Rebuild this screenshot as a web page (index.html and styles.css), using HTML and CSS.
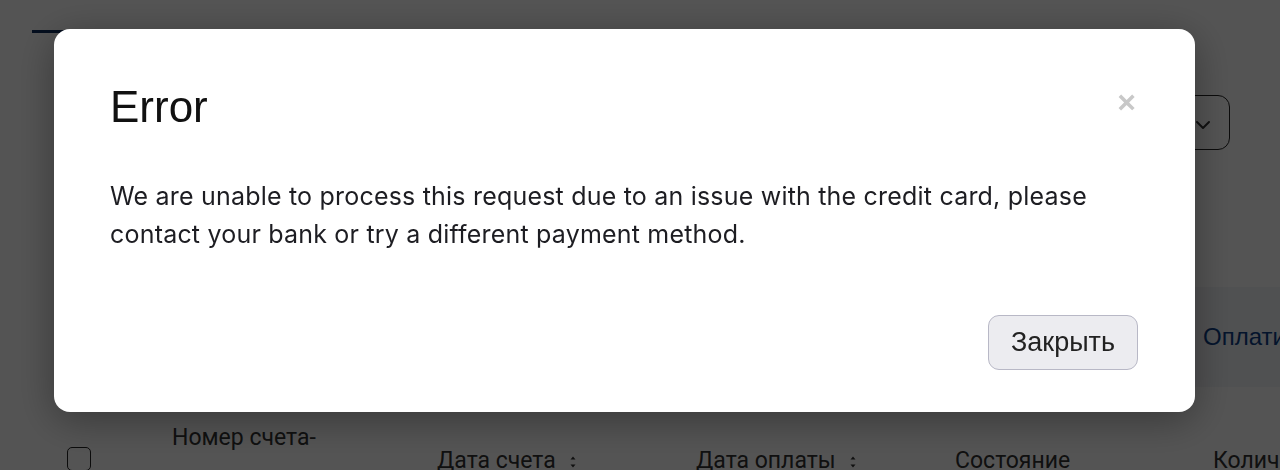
FILE: index.html
```html
<!DOCTYPE html>
<html lang="ru">
<head>
<meta charset="utf-8">
<title>Error</title>
<link rel="stylesheet" href="styles.css">
</head>
<body>
<div class="page">
  <div class="tabs">
    <div class="tab tab-active"></div>
    <div class="tab"></div>
  </div>
  <div class="toolbar">
    <div class="select">
      <span class="select-label">Все</span>
      <svg class="chev" width="16" height="10" viewBox="0 0 16 10"><path d="M2 2l6 6 6-6" fill="none" stroke="#333" stroke-width="2" stroke-linecap="round" stroke-linejoin="round"/></svg>
    </div>
  </div>
  <div class="banner">
    <span class="banner-text">Выбрано счетов: 0</span>
    <span class="banner-link">Оплатить</span>
  </div>
  <div class="thead">
    <div class="th th-check"><span class="checkbox"></span></div>
    <div class="th th-num">Номер счета-</div>
    <div class="th th-date">Дата счета <svg class="sort" width="8" height="14" viewBox="0 0 8 14"><path d="M4 1.5l2.5 3h-5zM4 12.5l2.5-3h-5z" fill="#333"/></svg></div>
    <div class="th th-pay">Дата оплаты <svg class="sort" width="8" height="14" viewBox="0 0 8 14"><path d="M4 1.5l2.5 3h-5zM4 12.5l2.5-3h-5z" fill="#333"/></svg></div>
    <div class="th th-state">Состояние</div>
    <div class="th th-qty">Количество</div>
  </div>
</div>
<div class="overlay"></div>
<div class="modal" role="dialog">
  <div class="modal-head">
    <h2 class="modal-title">Error</h2>
    <span class="modal-close">×</span>
  </div>
  <p class="modal-body">We are unable to process this request due to an issue with the credit card, please contact your bank or try a different payment method.</p>
  <div class="modal-foot">
    <button class="btn">Закрыть</button>
  </div>
</div>
</body>
</html>
```
FILE: styles.css
```css
html, body {
  margin: 0;
  padding: 0;
  height: 100%;
  overflow: hidden;
}
body {
  background: #ffffff;
  font-family: Roboto, "Liberation Sans", sans-serif;
  color: #333;
}
.page {
  width: 1280px;
  height: 470px;
}
.tabs {
  display: flex;
  padding-left: 32px;
  height: 33px;
  gap: 40px;
  align-items: flex-start;
}
.tab {
  width: 120px;
  height: 30px;
}
.tab-active {
  border-bottom: 3px solid #0e2d5c;
}
.toolbar {
  display: flex;
  justify-content: flex-end;
  padding: 62px 50px 0 0;
}
.select {
  width: 160px;
  height: 55px;
  border: 1.5px solid #222;
  border-radius: 12px;
  display: flex;
  align-items: center;
  justify-content: space-between;
  padding: 0 18px;
  box-sizing: border-box;
}
.select-label {
  font-size: 18px;
}
.chev {
  margin-top: 4px;
}
.banner {
  margin: 137px 0 0 60px;
  height: 100px;
  background: #f3f5f9;
  display: flex;
  align-items: center;
  justify-content: flex-end;
  box-sizing: border-box;
}
.banner-text {
  font-size: 20px;
  margin-right: auto;
  padding-left: 40px;
}
.banner-link {
  font-size: 24px;
  color: #0d3f86;
  margin-right: -40px;
  width: 117px;
  font-family: "Liberation Sans", sans-serif;
}
.thead {
  display: flex;
  padding: 37px 0 0 67px;
  align-items: flex-start;
}
.th {
  font-size: 23px;
  color: #333;
  line-height: 28px;
  flex: none;
}
.th-check {
  width: 105px;
  padding-top: 23px;
}
.checkbox {
  display: block;
  width: 24px;
  height: 24px;
  border: 1.5px solid #222;
  border-radius: 5px;
  box-sizing: border-box;
}
.th-num {
  width: 265px;
}
.th-date {
  width: 259px;
  padding-top: 23px;
}
.th-pay {
  width: 259px;
  padding-top: 23px;
}
.th-state {
  width: 258px;
  padding-top: 23px;
}
.th-qty {
  padding-top: 23px;
}
.sort {
  margin-left: 8px;
  vertical-align: -1px;
}
.overlay {
  position: fixed;
  inset: 0;
  background: rgba(0, 0, 0, 0.67);
}
.modal {
  position: fixed;
  left: 54px;
  top: 29px;
  width: 1141px;
  height: 383px;
  background: #fff;
  border-radius: 16px;
  box-shadow: 0 8px 40px rgba(0, 0, 0, 0.35);
  box-sizing: border-box;
  padding: 0 56px;
  display: flex;
  flex-direction: column;
}
.modal-head {
  display: flex;
  justify-content: space-between;
  align-items: flex-start;
  padding-top: 56px;
}
.modal-title {
  margin: 0;
  font-family: "Liberation Sans", Arial, sans-serif;
  font-weight: 400;
  font-size: 44px;
  line-height: 44px;
  color: #111;
}
.modal-close {
  font-family: "Liberation Sans", Arial, sans-serif;
  font-weight: 700;
  font-size: 32px;
  line-height: 30px;
  color: #c8c8c8;
  margin-top: 2px;
  margin-right: 3px;
}
.modal-body {
  margin: 48px 0 0;
  font-family: Inter, "Liberation Sans", sans-serif;
  font-size: 25px;
  line-height: 38px;
  letter-spacing: 0.2px;
  color: #1d1d22;
}
.modal-foot {
  display: flex;
  justify-content: flex-end;
  margin-top: auto;
  padding-bottom: 42px;
}
.btn {
  width: 150px;
  height: 55px;
  border: 1.5px solid #b8b8c6;
  border-radius: 11px;
  background: #ececf0;
  font-family: "Liberation Sans", Arial, sans-serif;
  font-size: 27px;
  color: #222;
  padding: 0;
  margin-right: 1px;
}
```
